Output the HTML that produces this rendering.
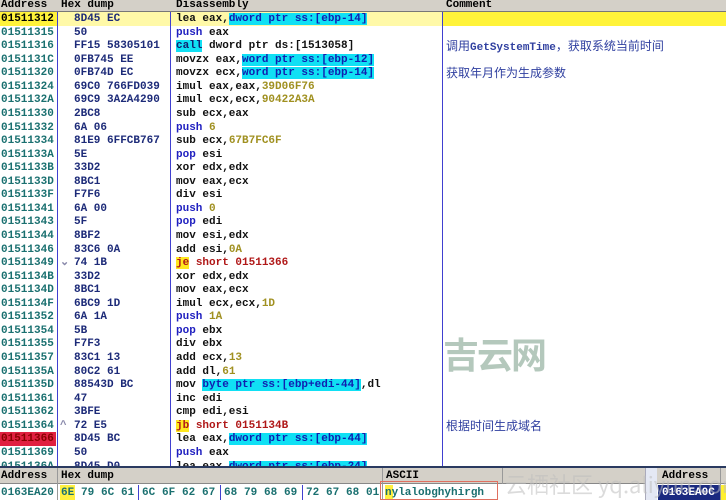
<!DOCTYPE html><html><head><meta charset="utf-8"><style>
*{margin:0;padding:0;box-sizing:border-box}
body{width:726px;height:500px;overflow:hidden;background:#fff;position:relative;font:bold 11px/14px "Liberation Mono","Noto Sans CJK SC",monospace}
.h{position:absolute;left:0;top:0;width:726px;height:12px;background:#d4d0c8;border-bottom:1px solid #777;color:#000;font-size:11px;line-height:11px}
.h span{position:absolute;top:0}
.vl{position:absolute;width:1px;background:#4040d0}
.r{position:absolute;left:0;width:726px;height:14px;white-space:pre}
.r span.a{position:absolute;left:1px;color:#1a7070}
.r span.x{position:absolute;left:74px;color:#1c2a78}
.r span.d{position:absolute;left:176px;color:#111}
.r span.m{position:absolute;left:446px;color:#3040a0;font-weight:normal;font-family:"Noto Sans CJK SC",sans-serif;font-size:12px}
.b{position:absolute;top:486px;color:#1a7070;white-space:nowrap;line-height:14px}
.c{background:#10e0f4;color:#1020b0}
.k{color:#2020c0}
.n{color:#a09020}
.j{color:#b01818}
.jy{background:#ffe820;color:#b01818}
</style></head><body>
<div class="h"><span style="left:1px">Address</span><span style="left:61px">Hex dump</span><span style="left:176px">Disassembly</span><span style="left:446px">Comment</span></div>
<div style="position:absolute;left:0;top:12px;width:726px;height:14px;background:#fff33a"></div>
<div style="position:absolute;left:57px;top:12px;width:385px;height:14px;background:#fff9a8"></div>
<div style="position:absolute;left:0;top:432px;width:56px;height:14px;background:#e02040"></div>
<div class="vl" style="left:57px;top:12px;height:455px"></div>
<div class="vl" style="left:170px;top:12px;height:455px"></div>
<div class="vl" style="left:442px;top:12px;height:455px"></div>
<div class="r" style="top:12px"><span class="a" style="color:#000">01511312</span><span class="x">8D45 EC</span><span class="d">lea eax,<span class="c">dword ptr ss:[ebp-14]</span></span></div>
<div class="r" style="top:25.6px"><span class="a">01511315</span><span class="x">50</span><span class="d"><span class="k">push</span> eax</span></div>
<div class="r" style="top:39.1px"><span class="a">01511316</span><span class="x">FF15 58305101</span><span class="d"><span style="background:#10e0f4;color:#102070">call</span> dword ptr ds:[1513058]</span><span class="m">调用<b style="font-family:'Liberation Mono';font-size:11px">GetSystemTime</b>，获取系统当前时间</span></div>
<div class="r" style="top:52.7px"><span class="a">0151131C</span><span class="x">0FB745 EE</span><span class="d">movzx eax,<span class="c">word ptr ss:[ebp-12]</span></span></div>
<div class="r" style="top:66.2px"><span class="a">01511320</span><span class="x">0FB74D EC</span><span class="d">movzx ecx,<span class="c">word ptr ss:[ebp-14]</span></span><span class="m">获取年月作为生成参数</span></div>
<div class="r" style="top:79.8px"><span class="a">01511324</span><span class="x">69C0 766FD039</span><span class="d">imul eax,eax,<span class="n">39D06F76</span></span></div>
<div class="r" style="top:93.4px"><span class="a">0151132A</span><span class="x">69C9 3A2A4290</span><span class="d">imul ecx,ecx,<span class="n">90422A3A</span></span></div>
<div class="r" style="top:106.9px"><span class="a">01511330</span><span class="x">2BC8</span><span class="d">sub ecx,eax</span></div>
<div class="r" style="top:120.5px"><span class="a">01511332</span><span class="x">6A 06</span><span class="d"><span class="k">push</span> <span class="n">6</span></span></div>
<div class="r" style="top:134px"><span class="a">01511334</span><span class="x">81E9 6FFCB767</span><span class="d">sub ecx,<span class="n">67B7FC6F</span></span></div>
<div class="r" style="top:147.6px"><span class="a">0151133A</span><span class="x">5E</span><span class="d"><span class="k">pop</span> esi</span></div>
<div class="r" style="top:161.2px"><span class="a">0151133B</span><span class="x">33D2</span><span class="d">xor edx,edx</span></div>
<div class="r" style="top:174.7px"><span class="a">0151133D</span><span class="x">8BC1</span><span class="d">mov eax,ecx</span></div>
<div class="r" style="top:188.3px"><span class="a">0151133F</span><span class="x">F7F6</span><span class="d">div esi</span></div>
<div class="r" style="top:201.8px"><span class="a">01511341</span><span class="x">6A 00</span><span class="d"><span class="k">push</span> <span class="n">0</span></span></div>
<div class="r" style="top:215.4px"><span class="a">01511343</span><span class="x">5F</span><span class="d"><span class="k">pop</span> edi</span></div>
<div class="r" style="top:229px"><span class="a">01511344</span><span class="x">8BF2</span><span class="d">mov esi,edx</span></div>
<div class="r" style="top:242.5px"><span class="a">01511346</span><span class="x">83C6 0A</span><span class="d">add esi,<span class="n">0A</span></span></div>
<div class="r" style="top:256.1px"><span class="a">01511349</span><span style="position:absolute;left:60px;color:#88a">⌄</span><span class="x">74 1B</span><span class="d"><span class="jy">je</span> <span class="j">short 01511366</span></span></div>
<div class="r" style="top:269.6px"><span class="a">0151134B</span><span class="x">33D2</span><span class="d">xor edx,edx</span></div>
<div class="r" style="top:283.2px"><span class="a">0151134D</span><span class="x">8BC1</span><span class="d">mov eax,ecx</span></div>
<div class="r" style="top:296.8px"><span class="a">0151134F</span><span class="x">6BC9 1D</span><span class="d">imul ecx,ecx,<span class="n">1D</span></span></div>
<div class="r" style="top:310.3px"><span class="a">01511352</span><span class="x">6A 1A</span><span class="d"><span class="k">push</span> <span class="n">1A</span></span></div>
<div class="r" style="top:323.9px"><span class="a">01511354</span><span class="x">5B</span><span class="d"><span class="k">pop</span> ebx</span></div>
<div class="r" style="top:337.4px"><span class="a">01511355</span><span class="x">F7F3</span><span class="d">div ebx</span></div>
<div class="r" style="top:351px"><span class="a">01511357</span><span class="x">83C1 13</span><span class="d">add ecx,<span class="n">13</span></span></div>
<div class="r" style="top:364.6px"><span class="a">0151135A</span><span class="x">80C2 61</span><span class="d">add dl,<span class="n">61</span></span></div>
<div class="r" style="top:378.1px"><span class="a">0151135D</span><span class="x">88543D BC</span><span class="d">mov <span class="c">byte ptr ss:[ebp+edi-44]</span>,dl</span></div>
<div class="r" style="top:391.7px"><span class="a">01511361</span><span class="x">47</span><span class="d">inc edi</span></div>
<div class="r" style="top:405.2px"><span class="a">01511362</span><span class="x">3BFE</span><span class="d">cmp edi,esi</span></div>
<div class="r" style="top:418.8px"><span class="a">01511364</span><span style="position:absolute;left:60px;color:#88a">^</span><span class="x">72 E5</span><span class="d"><span class="jy">jb</span> <span class="j">short 0151134B</span></span><span class="m">根据时间生成域名</span></div>
<div class="r" style="top:432.4px"><span class="a" style="color:#800">01511366</span><span class="x">8D45 BC</span><span class="d">lea eax,<span class="c">dword ptr ss:[ebp-44]</span></span></div>
<div class="r" style="top:445.9px"><span class="a">01511369</span><span class="x">50</span><span class="d"><span class="k">push</span> eax</span></div>
<div class="r" style="top:459.5px;height:7px;overflow:hidden"><span class="a">0151136A</span><span class="x">8D45 D0</span><span class="d">lea eax,<span class="c">dword ptr ss:[ebp-24]</span></span></div>
<div style="position:absolute;left:443px;top:332px;font:bold 36px/42px 'Noto Sans CJK SC',sans-serif;color:#b4c8bc;letter-spacing:-2px;white-space:nowrap">吉云网</div>
<div style="position:absolute;left:0;top:466px;width:726px;height:2px;background:#2a3a60"></div>
<div style="position:absolute;left:0;top:468px;width:726px;height:16px;background:#d4d0c8;border-bottom:1px solid #888"></div>
<div class="r" style="top:469px;color:#000"><span style="position:absolute;left:1px">Address</span><span style="position:absolute;left:61px">Hex dump</span><span style="position:absolute;left:386px">ASCII</span><span style="position:absolute;left:662px">Address</span></div>
<div class="vl" style="left:57px;top:468px;height:32px;background:#999"></div>
<div class="vl" style="left:382px;top:468px;height:32px;background:#999"></div>
<div class="vl" style="left:502px;top:468px;height:16px;background:#999"></div>
<div style="position:absolute;left:645px;top:468px;width:12px;height:32px;background:#e4e8f4;border-left:1px solid #aab"></div>
<div style="position:absolute;left:658px;top:485px;width:62px;height:15px;background:#1a2a80"></div>
<div style="position:absolute;left:720px;top:468px;width:1px;height:32px;background:#999"></div>
<div style="position:absolute;left:721px;top:485px;width:5px;height:15px;background:#fff030"></div>
<div style="position:absolute;left:60px;top:485px;width:15px;height:15px;background:#fff040"></div>
<div style="position:absolute;left:385px;top:485px;width:8px;height:15px;background:#fff040"></div>
<div class="vl" style="left:138px;top:485px;height:15px"></div>
<div class="vl" style="left:220px;top:485px;height:15px"></div>
<div class="vl" style="left:302px;top:485px;height:15px"></div>
<div style="position:absolute;left:380px;top:481px;width:118px;height:19px;border:1px solid #e07060"></div>
<div class="b" style="left:1px">0163EA20</div>
<div class="b" style="left:61px">6E</div><div class="b" style="left:81px">79</div><div class="b" style="left:101px">6C</div><div class="b" style="left:121px">61</div>
<div class="b" style="left:142px">6C</div><div class="b" style="left:162px">6F</div><div class="b" style="left:182px">62</div><div class="b" style="left:202px">67</div>
<div class="b" style="left:224px">68</div><div class="b" style="left:244px">79</div><div class="b" style="left:264px">68</div><div class="b" style="left:284px">69</div>
<div class="b" style="left:306px">72</div><div class="b" style="left:326px">67</div><div class="b" style="left:346px">68</div><div class="b" style="left:366px">01</div>
<div class="b" style="left:385px">nylalobghyhirgh</div>
<div class="b" style="left:662px;color:#fff">0163EA0C</div>
<div style="position:absolute;left:505px;top:470px;font:22px/28px 'Noto Sans CJK SC',sans-serif;color:rgba(190,190,190,.55);white-space:nowrap">云栖社区 yq.aliyun.com</div>
</body></html>
